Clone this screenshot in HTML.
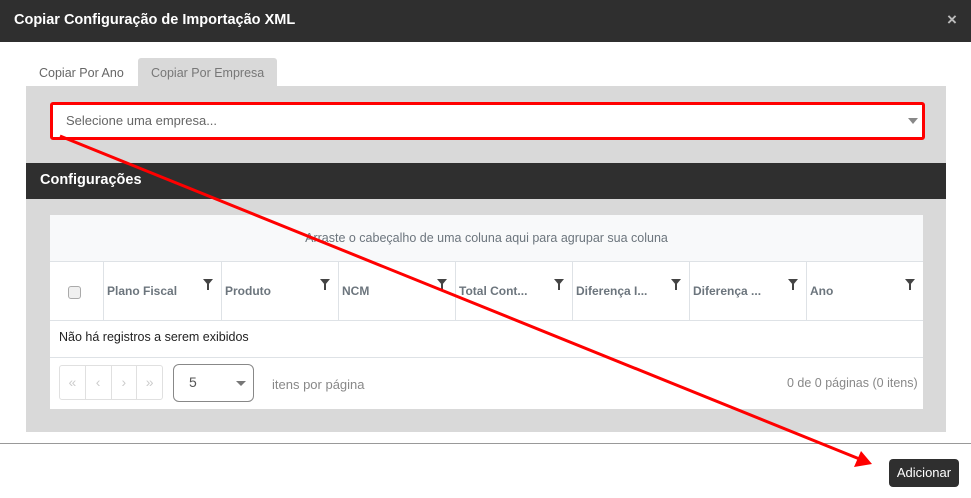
<!DOCTYPE html><html><head><meta charset="utf-8"><style>
body{margin:0;width:971px;height:498px;background:#fff;font-family:"Liberation Sans",sans-serif;position:relative;overflow:hidden}
.a{position:absolute}
.th{position:absolute;top:262px;height:58px;border-left:1px solid #dee2e6;font-size:12px;font-weight:bold;color:#6c757d;box-sizing:border-box;padding:22px 0 0 3px}
.f{position:absolute;right:8px;top:17px;width:0;height:0;border-left:5px solid transparent;border-right:5px solid transparent;border-top:6px solid #444}
.f:after{content:"";position:absolute;left:-1px;top:-1px;width:2px;height:6px;background:#444}
</style></head><body>
<div class="a" style="left:0;top:0;width:971px;height:42px;background:#2f2f2f"></div>
<div class="a" style="left:14px;top:12px;color:#fff;font-weight:bold;font-size:14.5px">Copiar Configuração de Importação XML</div>
<div class="a" style="left:947px;top:10px;color:#bbb;font-weight:bold;font-size:17px">×</div>
<div class="a" style="left:39px;top:66px;color:#666;font-size:12.5px">Copiar Por Ano</div>
<div class="a" style="left:138px;top:58px;width:139px;height:28px;background:#d9d9d9;border-radius:3px 3px 0 0"></div>
<div class="a" style="left:151px;top:66px;color:#777;font-size:12.5px">Copiar Por Empresa</div>
<div class="a" style="left:26px;top:86px;width:920px;height:346px;background:#d9d9d9"></div>
<div class="a" style="left:50px;top:102px;width:875px;height:38px;background:#fff;border:3px solid #f00;box-sizing:border-box;border-radius:3px"></div>
<div class="a" style="left:66px;top:113px;color:#666;font-size:13px">Selecione uma empresa...</div>
<div class="a" style="left:908px;top:118px;border-left:5px solid transparent;border-right:5px solid transparent;border-top:6px solid #888"></div>
<div class="a" style="left:26px;top:163px;width:920px;height:36px;background:#2f2f2f"></div>
<div class="a" style="left:40px;top:172px;color:#fff;font-weight:bold;font-size:14.5px">Configurações</div>
<div class="a" style="left:50px;top:215px;width:873px;height:194px;background:#fff"></div>
<div class="a" style="left:50px;top:215px;width:873px;height:47px;background:#f8f9fa;border-bottom:1px solid #dee2e6;box-sizing:border-box"></div>
<div class="a" style="left:50px;top:231px;width:873px;text-align:center;color:#6c757d;font-size:12.5px">Arraste o cabeçalho de uma coluna aqui para agrupar sua coluna</div>
<div class="a" style="left:68px;top:286px;width:11px;height:11px;border:1px solid #aaa;border-radius:3px;background:#f0f0f0"></div>
<div class="th" style="left:103px;width:118px">Plano Fiscal<i class="f"></i></div>
<div class="th" style="left:221px;width:117px">Produto<i class="f"></i></div>
<div class="th" style="left:338px;width:117px">NCM<i class="f"></i></div>
<div class="th" style="left:455px;width:117px">Total Cont...<i class="f"></i></div>
<div class="th" style="left:572px;width:117px">Diferença I...<i class="f"></i></div>
<div class="th" style="left:689px;width:117px">Diferença ...<i class="f"></i></div>
<div class="th" style="left:806px;width:117px">Ano<i class="f"></i></div>
<div class="a" style="left:50px;top:320px;width:873px;border-top:1px solid #dee2e6"></div>
<div class="a" style="left:59px;top:330px;font-size:12.5px;color:#222">Não há registros a serem exibidos</div>
<div class="a" style="left:50px;top:357px;width:873px;border-top:1px solid #dee2e6"></div>
<div class="a" style="left:59px;top:365px;width:104px;height:35px;border:1px solid #e0e0e0;border-radius:3px;box-sizing:border-box;display:flex;color:#ccc;font-size:14px">
<span style="flex:1;text-align:center;line-height:33px;border-right:1px solid #e0e0e0">«</span><span style="flex:1;text-align:center;line-height:33px;border-right:1px solid #e0e0e0">‹</span><span style="flex:1;text-align:center;line-height:33px;border-right:1px solid #e0e0e0">›</span><span style="flex:1;text-align:center;line-height:33px">»</span></div>
<div class="a" style="left:173px;top:364px;width:81px;height:38px;border:1px solid #888;border-radius:6px;box-sizing:border-box"></div>
<div class="a" style="left:189px;top:374px;font-size:14px;color:#555">5</div>
<div class="a" style="left:236px;top:381px;border-left:5px solid transparent;border-right:5px solid transparent;border-top:5px solid #777"></div>
<div class="a" style="left:272px;top:377px;font-size:13px;color:#888">itens por página</div>
<div class="a" style="left:787px;top:376px;font-size:12.5px;color:#888">0 de 0 páginas (0 itens)</div>
<div class="a" style="left:0;top:443px;width:971px;border-top:1px solid #999"></div>
<div class="a" style="left:889px;top:459px;width:70px;height:28px;background:#2f2f2f;border-radius:4px;color:#fff;font-size:13px;text-align:center;line-height:28px">Adicionar</div>
<svg class="a" style="left:0;top:0" width="971" height="498"><line x1="60" y1="136" x2="862" y2="460" stroke="#f00" stroke-width="3"/><polygon points="872,464 854,467 861,451" fill="#f00"/></svg>
</body></html>
